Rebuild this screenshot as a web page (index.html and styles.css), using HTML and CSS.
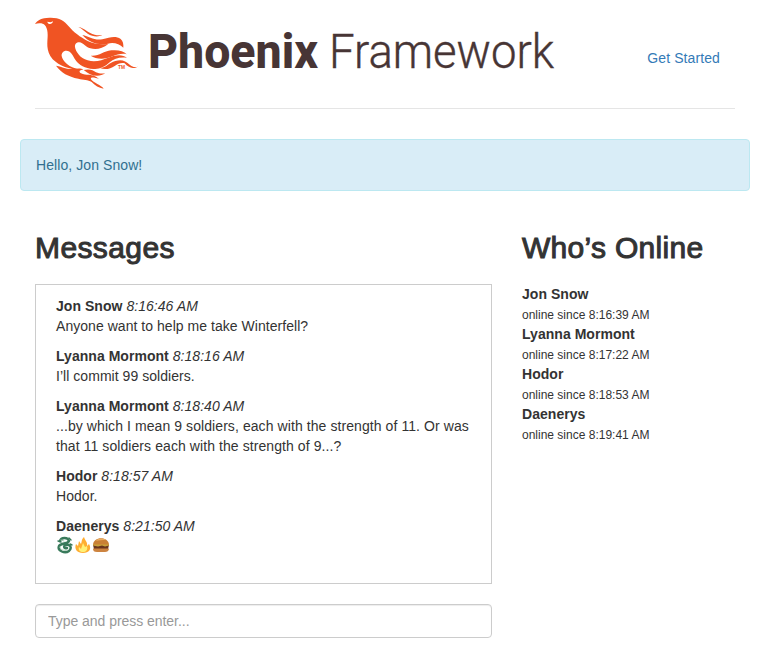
FILE: index.html
```html
<!DOCTYPE html>
<html lang="en">
<head>
<meta charset="utf-8">
<title>Phoenix Framework</title>
<link rel="stylesheet" href="styles.css">
</head>
<body>
<div class="container">
  <header class="header">
    <svg class="logo" width="525" height="85" viewBox="0 0 525 85" role="img">
      <g transform="scale(.33333)">
        <path fill="#f05423" fill-rule="evenodd" d="M15 42C22 30 35 24 58 23C87 22 103 31 116 49C130 66 151 82 173 93C193 103 213 104 235 102C217 117 197 120 181 115C167 112 160 98 148 97C139 97 134 103 135 111C137 124 150 145 173 151C196 158 217 150 233 144C254 135 277 131 291 144C271 140 252 147 239 157C223 172 207 179 190 177C165 176 147 165 137 151C129 137 122 122 109 122C99 122 94 130 95 138C98 153 115 174 154 179C122 180 89 169 68 148C46 121 53 96 53 75C53 53 45 42 34 40C26 39 21 40 15 42ZM52 35C53 44 67 45 69 34L62 37Z"/>
        <path fill="#f05423" d="M145 52C164 53 175 71 194 74C202 76 209 76 217 75C203 83 187 79 173 71C162 64 156 55 145 52ZM157 75C178 80 192 92 217 88C240 82 257 77 272 87C279 93 281 103 280 113C269 102 250 96 234 101C205 106 179 99 157 75ZM182 137C209 139 219 124 244 121C265 119 281 123 290 133C276 129 261 134 248 139C225 149 198 148 182 137ZM210 174C229 174 237 157 256 153C275 148 285 151 301 166C308 172 315 172 324 170C306 179 295 172 284 160C274 157 264 161 254 168C242 176 225 181 210 174ZM78 167C94 169 110 179 129 177C143 176 152 174 160 179C149 179 145 184 153 190C167 199 187 188 207 207C193 202 180 200 183 208C190 218 214 226 221 236C206 234 196 227 185 216C174 208 160 211 145 206C114 200 94 188 78 167ZM161 180C178 176 189 180 198 187C209 192 216 191 226 190C208 202 184 200 161 180Z"/>
      </g>
      <text class="tm" x="88" y="59" textLength="7" lengthAdjust="spacingAndGlyphs">TM</text>
      <text class="bold-word" x="118" y="58" textLength="170" lengthAdjust="spacingAndGlyphs">Phoenix</text>
      <text class="light-word" x="299" y="58" textLength="225" lengthAdjust="spacingAndGlyphs">Framework</text>
    </svg>
    <a class="start" href="#">Get Started</a>
  </header>
  <p class="alert">Hello, Jon Snow!</p>
  <main class="row">
    <section class="chat">
      <h2>Messages</h2>
      <div class="messages">
        <p><b>Jon Snow</b> <i>8:16:46 AM</i><br>Anyone want to help me take Winterfell?</p>
        <p><b>Lyanna Mormont</b> <i>8:18:16 AM</i><br>I’ll commit 99 soldiers.</p>
        <p><b>Lyanna Mormont</b> <i>8:18:40 AM</i><br><span class="long">...by which I mean 9 soldiers, each with the strength of 11. Or was<br>that 11 soldiers each with the strength of 9...?</span></p>
        <p><b>Hodor</b> <i>8:18:57 AM</i><br>Hodor.</p>
        <p><b>Daenerys</b> <i>8:21:50 AM</i><br>
          <svg class="emoji" width="54" height="18" viewBox="0 0 54 18">
            <g fill="none" stroke="#397a5b" stroke-linecap="round">
              <path stroke-width="2.4" d="M4 5C5 1 12 1 13 5C12 8 5 7 3 10C1 15 9 18 13 15C17 11 13 8 10 9C7 10 8 13 11 12"/>
              <path stroke="#a5c9b2" d="M5 4L8 5M4 11C4 14 8 15 11 14"/>
              <path stroke-width="1.4" d="M2 5L5 6M13 2L15 4M14 8L16 9"/>
            </g>
            <path fill="#ffae32" d="M20 8C18 13 21 17 27 17C33 17 36 13 33 8L31 10C32 6 29 5 28 1C25 4 26 6 25 8L23 5L22 10Z"/>
            <path fill="#fff176" d="M23 11L25 13L27 7L29 11L31 10C32 14 30 16 27 16C24 16 22 14 23 11Z"/>
            <path fill="#c98035" d="M37 9C37 0 53 0 53 9Z"/>
            <path fill="#e9ac62" d="M40 5C42 2 47 2 50 4C46 4 43 4 40 5Z"/>
            <path fill="#69351d" d="M37 9H53L52 13H38Z"/>
            <path fill="#c9a13a" d="M37 8.5H53V9.5L49 10.5L46 9.5L42 10.5L37 9.5Z"/>
            <path fill="#cd8440" d="M37 12.5H53C53 15 51 16 49 16H41C38 16 37 15 37 12.5Z"/>
          </svg>
        </p>
      </div>
      <input class="entry" type="text" placeholder="Type and press enter...">
    </section>
    <aside class="online">
      <h2>Who’s Online</h2>
      <ul>
        <li><b>Jon Snow</b><small>online since 8:16:39 AM</small></li>
        <li><b>Lyanna Mormont</b><small>online since 8:17:22 AM</small></li>
        <li><b>Hodor</b><small>online since 8:18:53 AM</small></li>
        <li><b>Daenerys</b><small>online since 8:19:41 AM</small></li>
      </ul>
    </aside>
  </main>
</div>
</body>
</html>
```
FILE: styles.css
```css
* { box-sizing: border-box; }
body { margin: 0; background: #fff; color: #333; font: 14px/20px "Liberation Sans", Arial, sans-serif; letter-spacing: .04px; overflow: hidden; }
.container { width: 730px; margin-left: 20px; }
.header { display: flex; justify-content: space-between; align-items: flex-start; height: 109px; margin: 0 15px; padding-top: 10px; border-bottom: 1px solid #e5e5e5; }
.logo { display: block; margin-left: -5px; overflow: visible; letter-spacing: 0; }
.bold-word, .light-word { fill: #473535; font-size: 48px; }
.bold-word { font-family: Roboto, sans-serif; font-weight: 800; }
.light-word { font-family: Roboto, sans-serif; font-weight: 300; stroke: #473535; stroke-width: .4px; }
.tm { fill: #f05423; font: bold 5px "Liberation Sans", sans-serif; }
.start { margin: 38px 15px 0 0; color: #337ab7; letter-spacing: .1px; text-decoration: none; }
.alert { height: 52px; margin: 30px 0; padding: 15px; background: #d9edf7; border: 1px solid #bce8f1; border-radius: 4px; color: #31708f; letter-spacing: .08px; }
.row { display: grid; grid-template-columns: 457px 1fr; gap: 30px; padding: 0 15px; }
h2 { margin: 10px 0 20px; font-size: 30px; font-weight: 400; line-height: 33px; letter-spacing: .4px; -webkit-text-stroke: 1px #333; }
.online h2 { letter-spacing: .3px; }
.messages { height: 300px; border: 1px solid #ccc; padding: 11px 20px; margin-bottom: 20px; }
.messages p { margin: 0 0 10px; white-space: nowrap; }
.long { letter-spacing: .08px; }
.emoji { display: block; }
.entry { display: block; width: 100%; height: 34px; padding: 6px 12px; border: 1px solid #ccc; border-radius: 4px; box-shadow: inset 0 1px 1px rgba(0,0,0,.075); font: inherit; letter-spacing: -.04px; }
.entry::placeholder { color: #999; opacity: 1; }
ul { list-style: none; margin: 0; padding: 0; }
li b, li small { display: block; height: 20px; }
small { font-size: 12px; line-height: 22px; letter-spacing: 0; }
```
